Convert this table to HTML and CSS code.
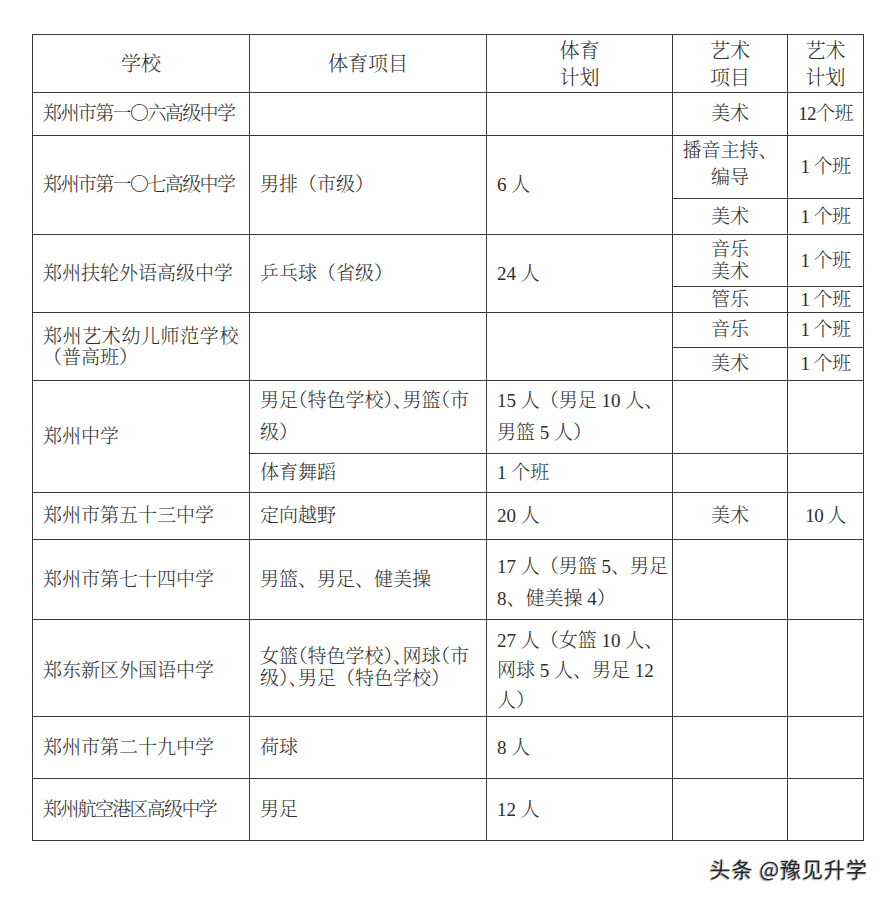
FILE: index.html
```html
<!DOCTYPE html>
<html lang="zh-CN">
<head>
<meta charset="utf-8">
<title>招生计划</title>
<link rel="stylesheet" href="styles.css">
</head>
<body>
<div class="page">
  <table class="plan">
    <colgroup>
      <col class="c1"><col class="c2"><col class="c3"><col class="c4"><col class="c5">
    </colgroup>
    <tbody>
      <tr class="h-head">
        <td class="head center">学校</td>
        <td class="head center">体育项目</td>
        <td class="head center lh27 hpad">体育<br>计划</td>
        <td class="head center lh27 hpad">艺术<br>项目</td>
        <td class="head center lh27 hpad">艺术<br>计划</td>
      </tr>
      <tr class="h43">
        <td class="tight">郑州市第一〇六高级中学</td>
        <td></td>
        <td></td>
        <td class="center">美术</td>
        <td class="center num">12个班</td>
      </tr>
      <tr class="h63">
        <td rowspan="2" class="tight">郑州市第一〇七高级中学</td>
        <td rowspan="2">男排（市级）</td>
        <td rowspan="2">6 人</td>
        <td class="center lh27 up">播音主持、<br>编导</td>
        <td class="center num">1 个班</td>
      </tr>
      <tr class="h36">
        <td class="center">美术</td>
        <td class="center num">1 个班</td>
      </tr>
      <tr class="h52">
        <td rowspan="2">郑州扶轮外语高级中学</td>
        <td rowspan="2">乒乓球（省级）</td>
        <td rowspan="2">24 人</td>
        <td class="center lh22">音乐<br>美术</td>
        <td class="center num">1 个班</td>
      </tr>
      <tr class="h26">
        <td class="center">管乐</td>
        <td class="center num">1 个班</td>
      </tr>
      <tr class="h35">
        <td rowspan="2" class="lh21 wide">郑州艺术幼儿师范学校<br><span class="paren">（普高班）</span></td>
        <td rowspan="2"></td>
        <td rowspan="2"></td>
        <td class="center">音乐</td>
        <td class="center num">1 个班</td>
      </tr>
      <tr class="h33">
        <td class="center">美术</td>
        <td class="center num">1 个班</td>
      </tr>
      <tr class="h73">
        <td rowspan="2">郑州中学</td>
        <td class="lh32"><span class="halt">男足（特色学校）、男篮（市</span><br>级）</td>
        <td class="lh32">15 人（男足 10 人、<br>男篮 5 人）</td>
        <td></td>
        <td></td>
      </tr>
      <tr class="h39">
        <td>体育舞蹈</td>
        <td>1 个班</td>
        <td></td>
        <td></td>
      </tr>
      <tr class="h47">
        <td>郑州市第五十三中学</td>
        <td>定向越野</td>
        <td>20 人</td>
        <td class="center">美术</td>
        <td class="center num">10 人</td>
      </tr>
      <tr class="h80">
        <td>郑州市第七十四中学</td>
        <td>男篮、男足、健美操</td>
        <td class="lh32 down">17 人（男篮 5、男足<br>8、健美操 4）</td>
        <td></td>
        <td></td>
      </tr>
      <tr class="h97">
        <td class="down">郑东新区外国语中学</td>
        <td class="lh22"><span class="halt">女篮（特色学校）、网球（市</span><br><span class="halt">级）、</span>男足（特色学校）</td>
        <td class="lh30 down2">27 人（女篮 10 人、<br>网球 5 人、男足 12<br>人）</td>
        <td></td>
        <td></td>
      </tr>
      <tr class="h62">
        <td>郑州市第二十九中学</td>
        <td>荷球</td>
        <td>8 人</td>
        <td></td>
        <td></td>
      </tr>
      <tr class="h62">
        <td class="tight2">郑州航空港区高级中学</td>
        <td>男足</td>
        <td>12 人</td>
        <td></td>
        <td></td>
      </tr>
    </tbody>
  </table>
  <div class="mark-row">
    <span class="mark">头条 @豫见升学</span>
  </div>
</div>
</body>
</html>
```

FILE: styles.css
```css
html, body {
  margin: 0;
  padding: 0;
  background: #ffffff;
}

.page {
  width: 888px;
  height: 897px;
  padding: 34px 0 0 32px;
  box-sizing: border-box;
  overflow: hidden;
}

.plan {
  border-collapse: collapse;
  table-layout: fixed;
  width: 832px;
  font-family: "Liberation Serif", "Noto Serif CJK SC", "Noto Sans CJK SC", serif;
  font-size: 19px;
  font-weight: 300;
  color: #2e2e2e;
}

.c1 { width: 217px; }
.c2 { width: 237px; }
.c3 { width: 186px; }
.c4 { width: 115px; }
.c5 { width: 76px; }

.plan td {
  border: 1px solid #3a3a3a;
  padding: 0 8px 0 10px;
  vertical-align: middle;
  line-height: 24px;
  white-space: nowrap;
  overflow: hidden;
}

.plan td.center {
  text-align: center;
  padding: 0 2px;
}

.plan td.num {
  letter-spacing: -0.6px;
  padding: 0;
}

.head { font-size: 20px; }
.lh27 { line-height: 27px !important; }
.lh30 { line-height: 30px !important; }
.lh22 { line-height: 22px !important; }
.lh21 { line-height: 21px !important; }
.lh32 { line-height: 32px !important; }
.hpad { padding-top: 3px !important; }
.up { padding-bottom: 6px !important; }
.down { padding-top: 6px !important; }
.down2 { padding-top: 5px !important; }

.tight { letter-spacing: -1.6px; }
.tight2 { letter-spacing: -1.7px; }
.wide { letter-spacing: 0.6px; }
.paren { letter-spacing: 0; }

.halt { font-feature-settings: "halt" 1; }

.h-head { height: 58px; }
.h43 { height: 43px; }
.h63 { height: 63px; }
.h36 { height: 36px; }
.h52 { height: 52px; }
.h26 { height: 26px; }
.h35 { height: 35px; }
.h33 { height: 33px; }
.h73 { height: 73px; }
.h39 { height: 39px; }
.h47 { height: 47px; }
.h80 { height: 80px; }
.h97 { height: 97px; }
.h62 { height: 62px; }

.mark-row {
  display: flex;
  justify-content: flex-end;
  width: 836px;
  margin-top: 15px;
}

.mark {
  font-family: "Noto Sans CJK SC", "Noto Sans", sans-serif;
  font-size: 21px;
  line-height: 24px;
  font-weight: 400;
  letter-spacing: 1px;
  color: #262626;
  text-shadow: -1px 1px 1px rgba(0, 0, 0, 0.35), 1px -1px 0 #ffffff;
}
```
